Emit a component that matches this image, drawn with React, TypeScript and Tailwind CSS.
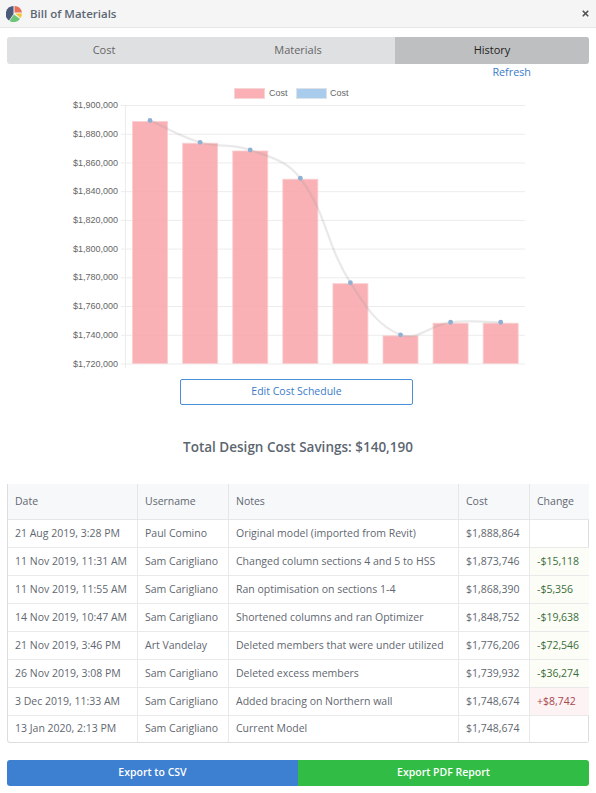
import { X } from "lucide-react";

const rows = [
  { date: "21 Aug 2019, 3:28 PM", user: "Paul Comino", notes: "Original model (imported from Revit)", cost: "$1,888,864", change: "" },
  { date: "11 Nov 2019, 11:31 AM", user: "Sam Carigliano", notes: "Changed column sections 4 and 5 to HSS", cost: "$1,873,746", change: "-$15,118" },
  { date: "11 Nov 2019, 11:55 AM", user: "Sam Carigliano", notes: "Ran optimisation on sections 1-4", cost: "$1,868,390", change: "-$5,356" },
  { date: "14 Nov 2019, 10:47 AM", user: "Sam Carigliano", notes: "Shortened columns and ran Optimizer", cost: "$1,848,752", change: "-$19,638" },
  { date: "21 Nov 2019, 3:46 PM", user: "Art Vandelay", notes: "Deleted members that were under utilized", cost: "$1,776,206", change: "-$72,546" },
  { date: "26 Nov 2019, 3:08 PM", user: "Sam Carigliano", notes: "Deleted excess members", cost: "$1,739,932", change: "-$36,274" },
  { date: "3 Dec 2019, 11:33 AM", user: "Sam Carigliano", notes: "Added bracing on Northern wall", cost: "$1,748,674", change: "+$8,742" },
  { date: "13 Jan 2020, 2:13 PM", user: "Sam Carigliano", notes: "Current Model", cost: "$1,748,674", change: "" },
];

const values = [1888864, 1873746, 1868390, 1848752, 1776206, 1739932, 1748674, 1748674];
const ticks = [1900000, 1880000, 1860000, 1840000, 1820000, 1800000, 1780000, 1760000, 1740000, 1720000];

const valueY = (v: number) => 364 - ((v - 1720000) / 180000) * 259;
const barX = (i: number) => 132 + i * 50.1;

// same spline maths the chart library uses, tension 0.4
function smoothPath() {
  const pts = values.map((v, i) => [barX(i) + 18, valueY(v) - 0.5]);
  const t = 0.4;
  const ctrl = pts.map((p, i) => {
    const prev = pts[i - 1] ?? p;
    const next = pts[i + 1] ?? p;
    const d01 = Math.hypot(p[0] - prev[0], p[1] - prev[1]);
    const d12 = Math.hypot(next[0] - p[0], next[1] - p[1]);
    const sum = d01 + d12 || 1;
    const fa = (t * d01) / sum;
    const fb = (t * d12) / sum;
    return {
      inX: p[0] - fa * (next[0] - prev[0]),
      inY: p[1] - fa * (next[1] - prev[1]),
      outX: p[0] + fb * (next[0] - prev[0]),
      outY: p[1] + fb * (next[1] - prev[1]),
    };
  });
  let d = `M${pts[0][0]} ${pts[0][1]}`;
  for (let i = 1; i < pts.length; i++) {
    d += ` C${ctrl[i - 1].outX} ${ctrl[i - 1].outY} ${ctrl[i].inX} ${ctrl[i].inY} ${pts[i][0]} ${pts[i][1]}`;
  }
  return d;
}

function CostChart() {
  return (
    <svg width="596" height="296" viewBox="0 80 596 296" className="block">
      <rect x="234.5" y="88.5" width="30" height="10" fill="#fbb0b5" stroke="#f6d5d7" />
      <text x="269" y="96" fontSize="9" fill="#666" fontFamily="Liberation Sans, sans-serif">Cost</text>
      <rect x="296.5" y="88.5" width="30" height="10" fill="#a9cbec" stroke="#dde3e8" />
      <text x="330" y="96" fontSize="9" fill="#666" fontFamily="Liberation Sans, sans-serif">Cost</text>

      {ticks.map((t, i) => {
        const y = 105.5 + i * 28.72;
        return (
          <g key={t}>
            <line x1="121" x2="525" y1={y} y2={y} stroke="#ececec" />
            <text x="118" y={y + 2.6} textAnchor="end" fontSize="9" fill="#666" fontFamily="Liberation Sans, sans-serif">
              ${t.toLocaleString("en-US")}
            </text>
          </g>
        );
      })}
      <line x1="125.5" x2="125.5" y1="105" y2="368" stroke="#ececec" />

      {values.map((v, i) => (
        <rect
          key={i}
          x={barX(i) + 0.5}
          y={valueY(v) + 0.5}
          width="35"
          height={363 - valueY(v)}
          fill="#f9a5aa"
          fillOpacity="0.87"
          stroke="#f9cfd1"
          strokeOpacity="0.8"
        />
      ))}

      <path d={smoothPath()} fill="none" stroke="#9a9a9a" strokeOpacity="0.22" strokeWidth="2.2" />
      {values.map((v, i) => (
        <circle key={i} cx={barX(i) + 18} cy={valueY(v) - 0.5} r="2.4" fill="#8fb0d2" />
      ))}
    </svg>
  );
}

function PieLogo() {
  return (
    <svg width="16" height="16" viewBox="0 0 32 32">
      <path d="M15 16V0A16 16 0 0 0 6 29Z" fill="#4a5a78" />
      <path d="M17 0A16 16 0 0 1 32 13H17Z" fill="#e9715a" />
      <path d="M18 15H32A16 16 0 0 1 29 24Z" fill="#f3c534" />
      <path d="M16 17L28 26A16 16 0 0 1 7 30Z" fill="#6cc477" />
    </svg>
  );
}

export default function App() {
  return (
    <div className="h-[793px] w-[596px] overflow-hidden bg-white font-['Open_Sans',sans-serif]">
      <header className="flex h-[28px] items-center justify-between border-b border-[#e6e6e6] bg-[#f5f5f5] pl-[6px] pr-[6px]">
        <div className="flex items-center gap-[8px]">
          <PieLogo />
          <span className="text-[11.5px] font-semibold text-[#5c6773]">Bill of Materials</span>
        </div>
        <X size={9} strokeWidth={4.5} className="text-[#555]" />
      </header>

      <div className="mx-[7px] mt-[9px] grid h-[27px] grid-cols-3 overflow-hidden rounded-[3px] bg-[#dfe0e2] text-[11px]">
        <div className="flex items-center justify-center text-[#666]">Cost</div>
        <div className="flex items-center justify-center text-[#666]">Materials</div>
        <div className="flex items-center justify-center bg-[#bebfc0] font-medium text-[#222]">History</div>
      </div>

      <div className="pr-[65px] text-right text-[10.8px] leading-[16px] text-[#3a7bc8]">Refresh</div>

      <CostChart />

      <div className="mt-[3px] flex justify-center pr-[3px]">
        <button className="h-[26px] w-[233px] rounded-[2px] border border-[#4a90d9] bg-white text-[10.5px] text-[#3a7bc8]">
          Edit Cost Schedule
        </button>
      </div>

      <h2 className="mt-[32px] text-center text-[13.5px] leading-[20px] font-semibold text-[#5c6670]">
        Total Design Cost Savings: $140,190
      </h2>

      <div className="mx-[7px] mt-[27px] overflow-hidden rounded-b-[3px] border-b border-l border-[#ddd] text-[10.5px] text-[#5f6770]">
        <div className="grid h-[36px] grid-cols-[130px_91px_230px_71px_1fr] items-stretch border-b border-[#e6e6e6] bg-[#f7f8fa]">
          {["Date", "Username", "Notes", "Cost", "Change"].map((h, i) => (
            <div key={h} className={`flex items-center pl-[7px] ${i < 4 ? "border-r border-[#e6e6e6]" : ""}`}>
              {h}
            </div>
          ))}
        </div>
        {rows.map((r) => (
          <div
            key={r.date}
            className="grid h-[28px] grid-cols-[130px_91px_230px_71px_1fr] items-stretch border-b border-[#e9e9e9] last:h-[26px] last:border-b-0"
          >
            <div className="flex items-center whitespace-nowrap border-r border-[#e9e9e9] pl-[7px]">{r.date}</div>
            <div className="flex items-center whitespace-nowrap border-r border-[#e9e9e9] pl-[7px]">{r.user}</div>
            <div className="flex items-center whitespace-nowrap border-r border-[#e9e9e9] pl-[7px]">{r.notes}</div>
            <div className="flex items-center border-r border-[#e9e9e9] pl-[7px]">{r.cost}</div>
            <div
              className={
                "flex items-center pl-[7px] " +
                (r.change.startsWith("-")
                  ? "bg-[#fbfdf6] text-[#3c6e3a]"
                  : r.change.startsWith("+")
                    ? "bg-[#fdf3f4] text-[#a9474f]"
                    : "border-r border-[#ddd]")
              }
            >
              {r.change}
            </div>
          </div>
        ))}
      </div>

      <div className="mx-[7px] mt-[17px] grid h-[26px] grid-cols-2 overflow-hidden rounded-[3px] text-[10.5px] font-semibold text-white">
        <button className="bg-[#3d7fd0]">Export to CSV</button>
        <button className="bg-[#31bc45]">Export PDF Report</button>
      </div>
    </div>
  );
}
